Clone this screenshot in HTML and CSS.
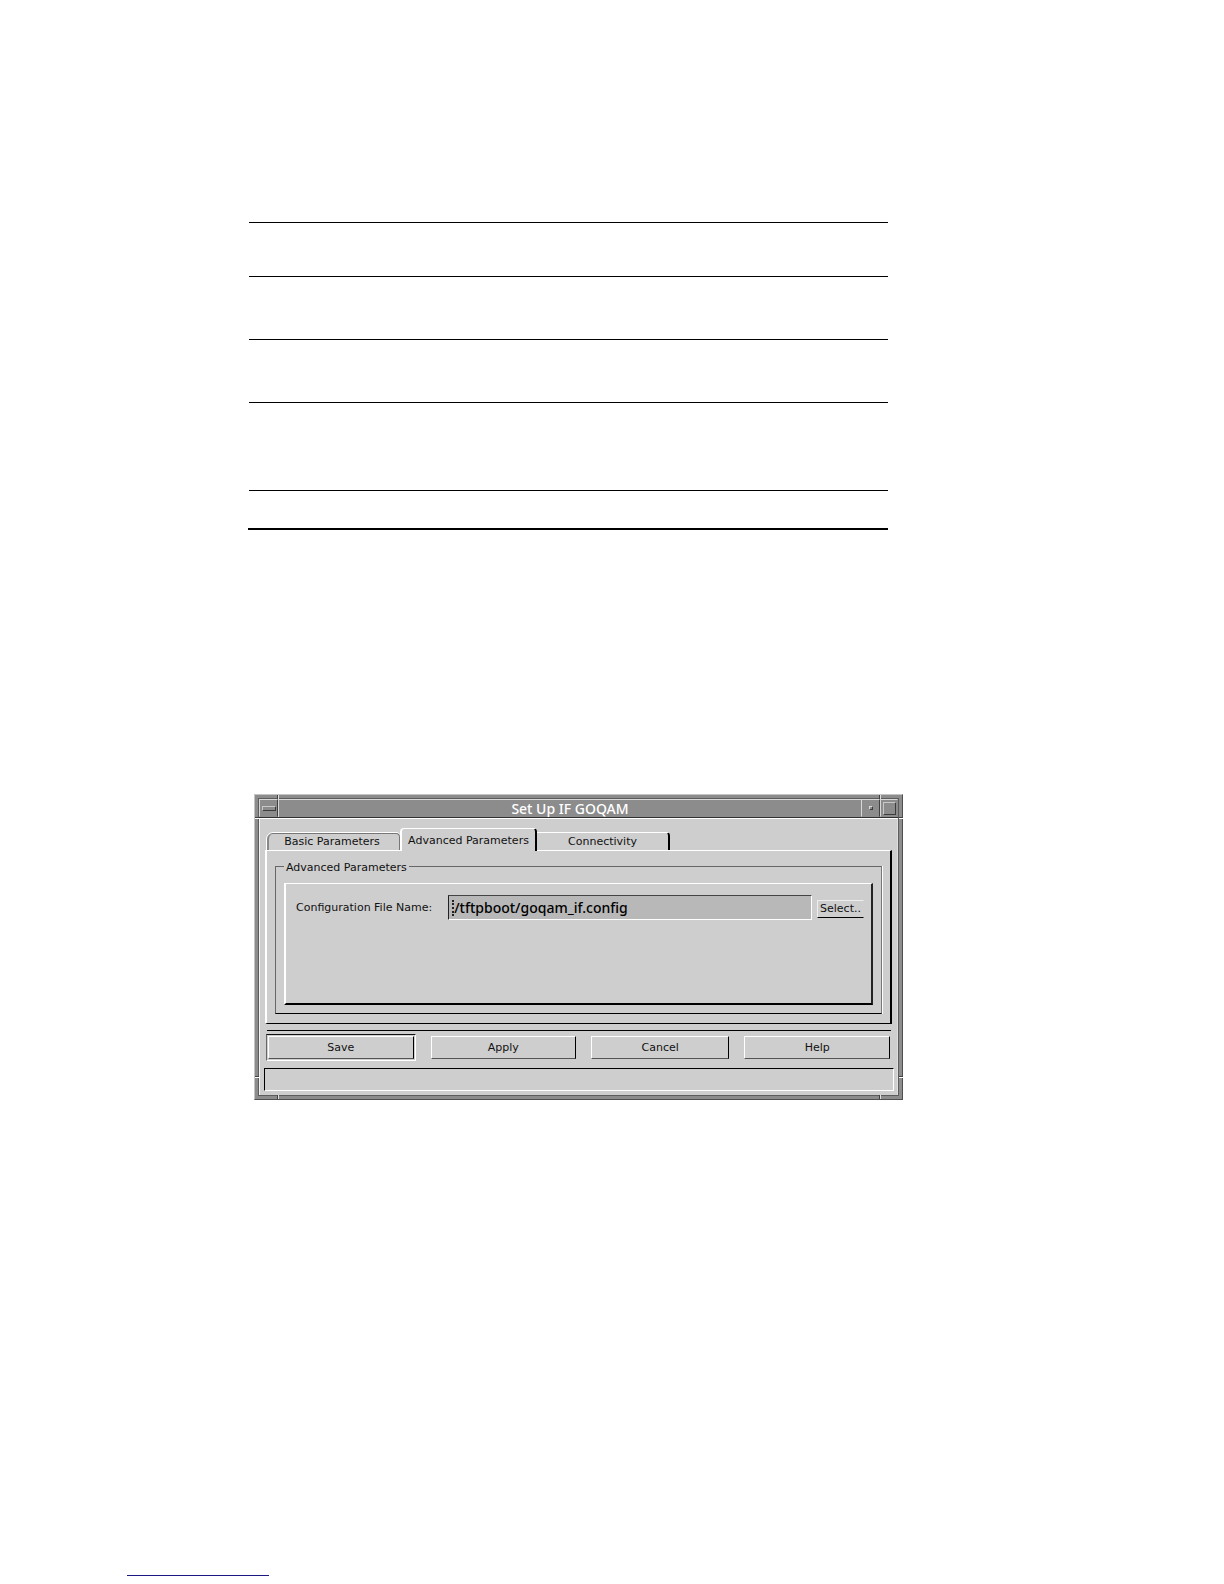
FILE: index.html
```html
<!DOCTYPE html>
<html lang="en">
<head>
  <meta charset="UTF-8">
  <title>Set Up IF GOQAM</title>
  <link rel="stylesheet" href="styles.css">
</head>
<body>
  <section class="rules">
    <div class="rule-row row-small"></div>
    <div class="rule-row row-medium"></div>
    <div class="rule-row row-medium"></div>
    <div class="rule-row row-large"></div>
    <div class="rule-row row-last"></div>
  </section>

  <main class="dialog-area">
    <div class="window">
      <div class="window-inner">
        <header class="title-bar">
          <button class="title-button" aria-label="Window menu">
            <svg width="14" height="5" viewBox="0 0 14 5" shape-rendering="crispEdges">
              <path d="M0.5 4V0.5H13" fill="none" stroke="#c8c8c8"/>
              <path d="M1 4.5H13.5V1" fill="none" stroke="#3c3c3c"/>
            </svg>
          </button>
          <h1 class="title">Set Up IF GOQAM</h1>
          <button class="title-button" aria-label="Minimize">
            <svg width="4" height="4" viewBox="0 0 4 4" shape-rendering="crispEdges">
              <path d="M0.5 3V0.5H3" fill="none" stroke="#d8d8d8"/>
              <path d="M1 3.5H3.5V1" fill="none" stroke="#3c3c3c"/>
            </svg>
          </button>
          <button class="title-button title-button-max" aria-label="Maximize">
            <svg width="13" height="13" viewBox="0 0 13 13" shape-rendering="crispEdges">
              <path d="M0.5 12V0.5H12" fill="none" stroke="#c8c8c8"/>
              <path d="M1 12.5H12.5V1" fill="none" stroke="#3c3c3c"/>
            </svg>
          </button>
        </header>

        <form class="content">
          <div class="tabs">
            <button type="button" class="tab tab-first">Basic Parameters</button>
            <button type="button" class="tab tab-active">Advanced Parameters</button>
            <button type="button" class="tab tab-last">Connectivity</button>
          </div>
          <div class="tab-pane">
            <fieldset class="group">
              <legend>Advanced Parameters</legend>
              <div class="panel">
                <label for="configFile">Configuration File Name:</label>
                <div class="file-box">
                  <span class="caret"></span>
                  <input type="text" id="configFile" value="/tftpboot/goqam_if.config">
                </div>
                <button type="button" class="select-button">Select..</button>
              </div>
            </fieldset>
          </div>
          <hr class="separator">
          <div class="actions">
            <div class="default-frame">
              <button type="button" class="action-button">Save</button>
            </div>
            <button type="button" class="action-button">Apply</button>
            <button type="button" class="action-button">Cancel</button>
            <button type="button" class="action-button">Help</button>
          </div>
          <div class="status-bar"></div>
        </form>
      </div>
      <!-- resize corner notches -->
      <span class="notch notch-side left top"></span>
      <span class="notch notch-side right top"></span>
      <span class="notch notch-side left bottom"></span>
      <span class="notch notch-side right bottom"></span>
      <span class="notch notch-end left top"></span>
      <span class="notch notch-end right top"></span>
      <span class="notch notch-end left bottom"></span>
      <span class="notch notch-end right bottom"></span>
    </div>
  </main>

  <hr class="footer-line">
</body>
</html>
```
FILE: styles.css
```css
* {
  box-sizing: border-box;
}

body {
  margin: 0;
  background-color: #fff;
  color: #111;
  font-family: "DejaVu Sans", Verdana, sans-serif;
  font-size: 11px;
  line-height: 14px;
}

button, input {
  font: inherit;
  color: inherit;
  margin: 0;
  padding: 0;
  border-radius: 0;
}

.rules {
  margin: 222px 336px 0 248px;
  border-bottom: 2px solid #000;
}

.rule-row {
  margin-left: 1px;
  border-top: 1px solid #000;
}

.row-small {
  height: 54px;
}

.row-medium {
  height: 63px;
}

.row-large {
  height: 88px;
}

.row-last {
  height: 38px;
}

.dialog-area {
  padding: 264px 321px 0 254px;
}

.window {
  position: relative;
  padding: 3px;
  background-color: #8c8c8c;
  border: 1px solid;
  border-color: #c4c4c4 #505050 #505050 #c4c4c4;
}

.window-inner {
  border: 1px solid #5c5c5c;
  background-color: #cecece;
}

.title-bar {
  display: flex;
  height: 19px;
  background-color: #8c8c8c;
  border-bottom: 1px solid #303030;
}

.title-button {
  display: flex;
  align-items: center;
  justify-content: center;
  width: 19px;
  background-color: #8c8c8c;
  border: 1px solid;
  border-color: #d8d8d8 #404040 #8c8c8c #d8d8d8;
}

.title-button-max {
  width: 18px;
  border-right-color: #8c8c8c;
}

.title {
  flex: 1;
  margin: 0;
  border-top: 1px solid #d8d8d8;
  border-left: 1px solid #d8d8d8;
  color: #fff;
  font-family: "Noto Sans", sans-serif;
  font-size: 14px;
  font-weight: 500;
  line-height: 17px;
  text-align: center;
}

.content {
  padding: 9px 5px 4px 5px;
  border: 1px solid #f4f4f4;
  border-color: #fff #dedede #cecece #f4f4f4;
  border-bottom: 0;
}

.tabs {
  display: flex;
  align-items: flex-end;
  padding-left: 2px;
}

.tab {
  height: 18px;
  background-color: #cecece;
  border: 0 solid;
  text-align: center;
}

.tab-first {
  width: 133px;
  height: 17px;
  padding-right: 4px;
  border-width: 1px 1px 0 2px;
  border-color: #777 #777 #777 #888;
  border-radius: 6px 4px 0 0;
  box-shadow: 0 -1px 0 #fff, -1px 0 0 #fff;
}

/* covers the pane's top edge so the tab joins it */
.tab-active {
  width: 137px;
  height: 23px;
  margin-bottom: -1px;
  padding-top: 2px;
  position: relative;
  border-width: 1px 2px 0 2px;
  border-color: #fff #000 #fff #fff;
  border-radius: 4px 4px 0 0;
}

.tab-last {
  width: 133px;
  border-width: 1px 2px 0 0;
  border-color: #fff #000 #fff #fff;
  border-radius: 0 4px 0 0;
}

.tab-pane {
  padding: 6px 8px 9px;
  border: 1px solid;
  border-width: 1px 2px 1px 2px;
  border-color: #fff #000 #000 #fff;
}

.group {
  min-width: 0;
  margin: 0;
  padding: 8px 8px 8px;
  border: 1px solid;
  border-color: #666 #777 #000 #666;
  box-shadow: 1px 0 0 #fff;
}

.group legend {
  padding: 4px 2px 0;
}

.panel {
  display: flex;
  align-items: flex-start;
  height: 122px;
  padding: 11px 7px 0 10px;
  border: 2px solid;
  border-top-width: 1px;
  border-color: #fff #222 #000 #fff;
}

.panel label {
  margin-right: 16px;
  line-height: 26px;
}

.file-box {
  display: flex;
  align-items: center;
  flex: 1;
  height: 25px;
  margin-right: 5px;
  padding-left: 3px;
  background-color: #b8b8b8;
  border: 1px solid;
  border-color: #444 #fff #fff #222;
}

.caret {
  height: 16px;
  border-left: 2px dotted #222;
}

.file-box input {
  flex: 1;
  min-width: 0;
  border: 0;
  background: none;
  color: #000;
  font-family: "Noto Sans", sans-serif;
  font-size: 14px;
  font-weight: 500;
  line-height: 20px;
  outline: none;
}

.select-button {
  width: 47px;
  height: 18px;
  margin-top: 5px;
  background-color: #cecece;
  border: 1px solid;
  border-color: #eee #cecece #000 #eee;
}

.separator {
  margin: 6px 1px 3px 2px;
  border: 0;
  border-top: 1px solid #000;
}

.actions {
  display: grid;
  grid-template-columns: 149fr 145fr 138fr 145fr;
  gap: 15px;
  align-items: center;
  margin: 0 2px 7px 1px;
}

.default-frame {
  padding: 1px;
  border: 1px solid;
  border-color: #111 #fff #fff #666;
}

.action-button {
  width: 100%;
  height: 23px;
  background-color: #cecece;
  border: 1px solid;
  border-color: #fff #000 #555 #fff;
}

.status-bar {
  height: 23px;
  margin: 0 -2px 0 -1px;
  border: 1px solid;
  border-color: #000 #fff #fff #000;
}

.notch {
  position: absolute;
}

.notch-side {
  width: 4px;
  height: 2px;
  border-top: 1px solid #404040;
  border-bottom: 1px solid #fff;
}

.notch-end {
  width: 2px;
  height: 4px;
  border-left: 1px solid #404040;
  border-right: 1px solid #e0e0e0;
}

.notch-side.left {
  left: 0;
}

.notch-side.right {
  right: -1px;
}

.notch-side.top {
  top: 22px;
}

.notch-side.bottom {
  bottom: 21px;
}

.notch-end.left {
  left: 22px;
}

.notch-end.right {
  right: 21px;
}

.notch-end.top {
  top: 0;
}

.notch-end.bottom {
  bottom: 0;
}

.footer-line {
  width: 142px;
  margin: 475px 0 8px 127px;
  border: 0;
  border-top: 1px solid #1a1a80;
}
```
